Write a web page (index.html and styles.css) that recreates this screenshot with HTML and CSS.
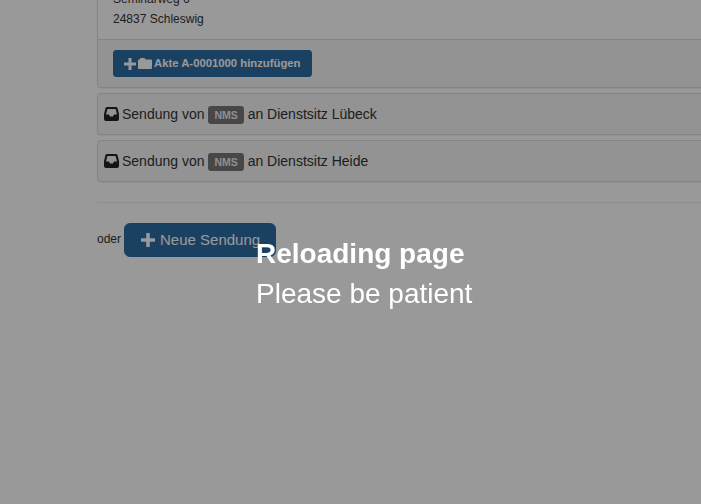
FILE: index.html
```html
<!DOCTYPE html>
<html lang="de">
<head>
    <meta charset="UTF-8">
    <title>Sendungen</title>
    <link rel="stylesheet" href="styles.css">
</head>
<body>
    <div class="content">
        <div class="panel">
            <div class="panel-body">
                Seminarweg 6<br>
                24837 Schleswig
            </div>
            <div class="panel-footer">
                <button class="btn btn-sm">
                    <svg class="icon" width="12" height="12" viewBox="0 0 12 12"><path d="M4.500 0h3v4.500H12v3H7.500V12h-3V7.500H0v-3h4.500z"/></svg>
                    <svg class="icon" width="14" height="11" viewBox="0 0 14 11"><path d="M0 2.500Q0 1.500 1 1.500h.5L2.500 0h4l1 1.500H13q1 0 1 1V10q0 1-1 1H1q-1 0-1-1z"/></svg>
                    <span class="btn-text">Akte A-0001000 hinzufügen</span>
                </button>
            </div>
        </div>

        <div class="panel shipment">
            <svg class="inbox" width="15" height="14" viewBox="0 0 15 14"><path fill-rule="evenodd" d="M3 0h9q1 0 1.500 1L15 7v5q0 2-2 2H2q-2 0-2-2V7l1.500-6Q2 0 3 0zM3.400 2 2 7.500h3L6 9.500h3l1-2h3L11.600 2z"/></svg>
            <span>Sendung von <span class="label">NMS</span> an Dienstsitz Lübeck</span>
        </div>
        <div class="panel shipment">
            <svg class="inbox" width="15" height="14" viewBox="0 0 15 14"><path fill-rule="evenodd" d="M3 0h9q1 0 1.500 1L15 7v5q0 2-2 2H2q-2 0-2-2V7l1.500-6Q2 0 3 0zM3.400 2 2 7.500h3L6 9.500h3l1-2h3L11.600 2z"/></svg>
            <span>Sendung von <span class="label">NMS</span> an Dienstsitz Heide</span>
        </div>

        <hr>

        <div class="new-row">
            <span class="or">oder</span>
            <button class="btn btn-new">
                <svg class="icon" width="14" height="14" viewBox="0 0 12 12"><path d="M4.500 0h3v4.500H12v3H7.500V12h-3V7.500H0v-3h4.500z"/></svg>
                <span class="btn-text">Neue Sendung</span>
            </button>
        </div>
    </div>

    <div class="overlay">
        <h1>Reloading page</h1>
        <p>Please be patient</p>
    </div>
</body>
</html>
```

FILE: styles.css
```css
html, body {
    height: 100%;
}
body {
    margin: 0;
    overflow: hidden;
    background-color: #fff;
    color: #333;
    font-family: "Liberation Sans", Arial, sans-serif;
    font-size: 14px;
    line-height: 20px;
}
.content {
    width: 800px;
    margin: -12px 0 0 97px;
}
.panel {
    box-sizing: border-box;
    background-color: #fff;
    border: 1px solid #ddd;
    border-radius: 4px;
    box-shadow: 0 1px 1px rgba(0, 0, 0, .05);
    margin-bottom: 5px;
}
.panel-body {
    height: 50px;
    box-sizing: border-box;
    padding: 0 15px;
    font-size: 12px;
    line-height: 20px;
}
.panel-footer {
    height: 48px;
    box-sizing: border-box;
    padding: 10px 15px;
    background-color: #f5f5f5;
    border-top: 1px solid #ddd;
    border-radius: 0 0 3px 3px;
}
.btn {
    display: flex;
    align-items: center;
    box-sizing: border-box;
    background-color: #2e6da4;
    border: 1px solid #2e6da4;
    color: #fff;
    font-family: inherit;
    padding: 0;
    white-space: nowrap;
}
.btn-sm {
    width: 199px;
    height: 27px;
    gap: 2px;
    padding-left: 10px;
    border-radius: 3px;
    font-size: 11.300px;
    font-weight: bold;
}
.btn-new {
    width: 152px;
    height: 34px;
    gap: 5px;
    padding-left: 16px;
    border-radius: 6px;
    font-size: 15px;
}
.btn-text {
    margin-top: -2px;
}
.icon {
    fill: #fff;
    flex: none;
}
.shipment {
    display: flex;
    align-items: center;
    gap: 3px;
    height: 42px;
    padding-left: 6px;
    background-color: #f5f5f5;
    white-space: nowrap;
}
.inbox {
    fill: #222;
    flex: none;
}
.label {
    background-color: #777;
    color: #eee;
    font-size: 10.500px;
    font-weight: bold;
    line-height: 1;
    padding: 3px 6px;
    border-radius: 3px;
}
hr {
    border: 0;
    border-top: 1px solid #eee;
    margin: 20px 0;
}
.new-row {
    display: flex;
    align-items: center;
    gap: 3px;
    font-size: 12px;
}
.or {
    position: relative;
    top: -1px;
}
.overlay {
    position: fixed;
    top: 0;
    left: 0;
    right: 0;
    bottom: 0;
    box-sizing: border-box;
    padding: 238px 0 0 256px;
    background-color: rgba(0, 0, 0, .4);
    color: #fff;
    font-size: 28px;
}
.overlay h1 {
    margin: 0 0 9px;
    font-size: 28px;
    line-height: 31px;
}
.overlay p {
    margin: 0;
    line-height: 31px;
}
```
